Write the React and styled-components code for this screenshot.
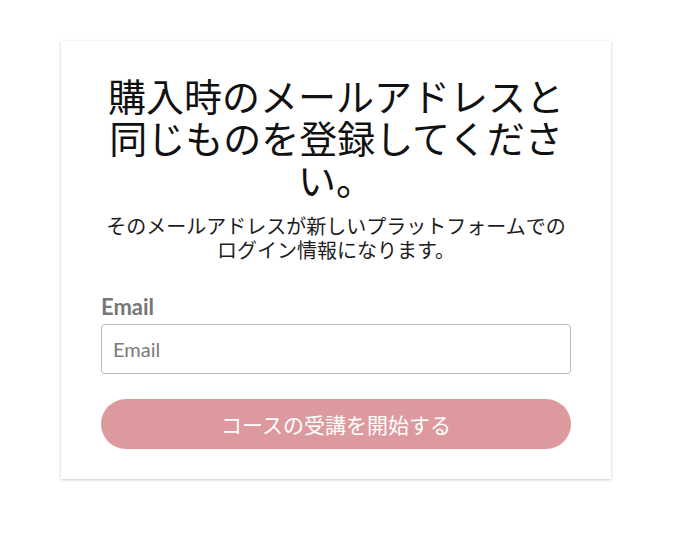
import React from "react";
import styled, { createGlobalStyle } from "styled-components";

const Global = createGlobalStyle`
  html, body { margin: 0; padding: 0; background: #ffffff; }
  body { font-family: "Noto Sans CJK JP", "Noto Sans", sans-serif; }
  * { box-sizing: border-box; }
`;

const Page = styled.div`
  padding: 41px 0 40px 61px;
`;

const Card = styled.form`
  width: 550px;
  background: #fff;
  box-shadow: 0 1px 3px rgba(0, 0, 0, 0.2), 0 0 2px rgba(0, 0, 0, 0.06);
  padding: 33px 40px 30px;
  display: flex;
  flex-direction: column;
`;

const Title = styled.h1`
  margin: 0;
  font-family: "Noto Sans CJK JP", sans-serif;
  font-weight: 400;
  font-size: 38px;
  line-height: 42px;
  color: #111;
  text-align: center;
`;

const Subtitle = styled.p`
  margin: 14px 0 0;
  font-family: "Noto Sans CJK JP", sans-serif;
  font-size: 20px;
  line-height: 24px;
  color: #1d1d1d;
  text-align: center;
`;

const Field = styled.div`
  margin-top: 32px;
  display: flex;
  flex-direction: column;
  gap: 4px;
`;

const Label = styled.label`
  font-family: "Lato", "Open Sans", sans-serif;
  font-weight: 700;
  font-size: 22px;
  line-height: 26px;
  color: #767676;
`;

const Input = styled.input`
  width: 100%;
  height: 50px;
  border: 1px solid #b9bcc4;
  border-radius: 4px;
  padding: 0 11px;
  font-family: "Lato", "Open Sans", sans-serif;
  font-size: 20px;
  color: #333;
  outline: none;
  &::placeholder { color: #7a7a7a; }
`;

const Button = styled.button`
  margin-top: 25px;
  height: 50px;
  width: 100%;
  border: none;
  border-radius: 25px;
  background: #dc9a9e;
  color: #fff;
  font-family: "Noto Sans CJK JP", sans-serif;
  font-size: 21px;
  cursor: pointer;
`;

export default function App() {
  return (
    <>
      <Global />
      <Page>
        <Card onSubmit={(e) => e.preventDefault()}>
          <Title>購入時のメールアドレスと同じものを登録してください。</Title>
          <Subtitle>そのメールアドレスが新しいプラットフォームでのログイン情報になります。</Subtitle>
          <Field>
            <Label htmlFor="email">Email</Label>
            <Input id="email" type="email" placeholder="Email" />
          </Field>
          <Button type="submit">コースの受講を開始する</Button>
        </Card>
      </Page>
    </>
  );
}
